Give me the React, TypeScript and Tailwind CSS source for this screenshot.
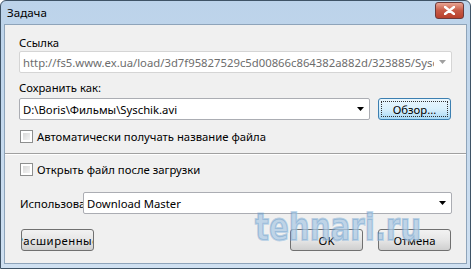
import React from 'react'

function Arrow({ gray }: { gray?: boolean }) {
  return (
    <svg width="7" height="4" viewBox="0 0 7 4">
      <path d="M0 0 H7 L3.5 4 Z" fill={gray ? '#a0a0a0' : '#000'} />
    </svg>
  )
}

function Combo({ text, gray, className }: { text: string; gray?: boolean; className?: string }) {
  return (
    <div
      className={
        'h-[22px] flex items-center bg-white border rounded-[2px] ' +
        (gray ? 'border-[#d5d5d5] text-[#6d6d6d] ' : 'border-[#abadb3] text-black ') +
        (className ?? '')
      }
    >
      <div className="flex-1 overflow-hidden whitespace-nowrap pl-[3px]">{text}</div>
      <div className="w-[17px] flex justify-center shrink-0">
        <Arrow gray={gray} />
      </div>
    </div>
  )
}

function Check({ label }: { label: string }) {
  return (
    <div className="h-[15px] flex items-center gap-[4px] pl-[1px]">
      <div className="w-[13px] h-[13px] border border-[#8e8f8f] bg-white p-[2px]">
        <div className="w-full h-full bg-gradient-to-br from-[#d8d8d8] to-[#f4f4f4]" />
      </div>
      <span>{label}</span>
    </div>
  )
}

function Btn({ children, focused, className }: { children: React.ReactNode; focused?: boolean; className?: string }) {
  return (
    <div
      className={
        'h-[22px] w-[73px] rounded-[3px] border flex items-center justify-center overflow-hidden whitespace-nowrap ' +
        (focused
          ? 'border-[#3c7fb1] bg-gradient-to-b from-[#eaf6fd] via-[#d9f0fc] to-[#a7d9f5] p-[2px] '
          : 'border-[#707070] bg-gradient-to-b from-[#f2f2f2] via-[#e6e6e6] to-[#cfcfcf] ') +
        (className ?? '')
      }
    >
      {focused ? (
        <div className="w-full h-full border border-dotted border-[#333] flex items-center justify-center">
          {children}
        </div>
      ) : (
        children
      )}
    </div>
  )
}

export default function App() {
  return (
    <div
      className="relative w-[471px] h-[269px] flex flex-col border border-[#3f5366] rounded-t-[6px] bg-gradient-to-b from-[#bcd3ea] to-[#cfe0f1] text-[11.3px] leading-[15px]"
      style={{ fontFamily: '"Noto Sans", "Open Sans", sans-serif' }}
    >
      {/* title bar */}
      <div className="h-[23px] flex items-center justify-between pl-[6px] pr-[6px]">
        <span className="text-black text-[11.6px]">Задача</span>
        <div className="w-[29px] h-[17px] mt-[-4px] rounded-[3px] border border-[#6d3a3a] bg-gradient-to-b from-[#e8a493] via-[#c75a46] to-[#b8402c] flex items-center justify-center">
          <svg width="11" height="9" viewBox="0 0 11 9">
            <path d="M1 1 L10 8 M10 1 L1 8" stroke="#fff" strokeWidth="2.4" strokeLinecap="round" />
          </svg>
        </div>
      </div>

      {/* client area */}
      <div className="mx-[3px] mb-[4px] flex-1 border border-[#8ea4ba] bg-[#f0f0f0] px-[14px] pt-[10px] flex flex-col">
        <div className="h-[15px]">Ссылка</div>
        <Combo
          className="mt-[1px]"
          gray
          text="http://fs5.www.ex.ua/load/3d7f95827529c5d00866c864382a882d/323885/Syschik.avi"
        />
        <div className="h-[15px] mt-[7px]">Сохранить как:</div>
        <div className="flex mt-[3px] gap-[8px] items-center">
          <Combo className="flex-1" text="D:\Boris\Фильмы\Syschik.avi" />
          <Btn focused className="mr-[1px]">Обзор...</Btn>
        </div>
        <div className="mt-[9px]">
          <Check label="Автоматически получать название файла" />
        </div>
        <div className="-mx-[14px] mt-[9px] h-px bg-[#a0a0a0] border-b border-white box-content" />
        <div className="mt-[7px]">
          <Check label="Открыть файл после загрузки" />
        </div>
        <div className="flex items-center mt-[15px]">
          <div className="w-[64px] overflow-hidden whitespace-nowrap pl-[1px]">Использовать:</div>
          <Combo className="flex-1" text="Download Master" />
        </div>
        <div className="flex items-center mt-[15px]">
          <Btn className="ml-[2px] w-[72px]">
            <span className="tracking-[0.5px]">Расширенные</span>
          </Btn>
          <div className="flex-1" />
          <Btn>OK</Btn>
          <Btn className="ml-[15px] mr-[1px]">Отмена</Btn>
        </div>
      </div>

      {/* watermark */}
      <div
        className="absolute left-[254px] top-[205px] origin-left scale-x-[0.77] text-[38px] leading-[42px] font-bold text-[#5f97c9]/40 pointer-events-none"
        style={{
          fontFamily: '"DejaVu Sans", sans-serif',
          WebkitTextStroke: '2px rgba(95,151,201,0.4)',
          textShadow: '1px 1px 1px rgba(255,255,255,0.6)',
        }}
      >
        tehnari.ru
      </div>
    </div>
  )
}
